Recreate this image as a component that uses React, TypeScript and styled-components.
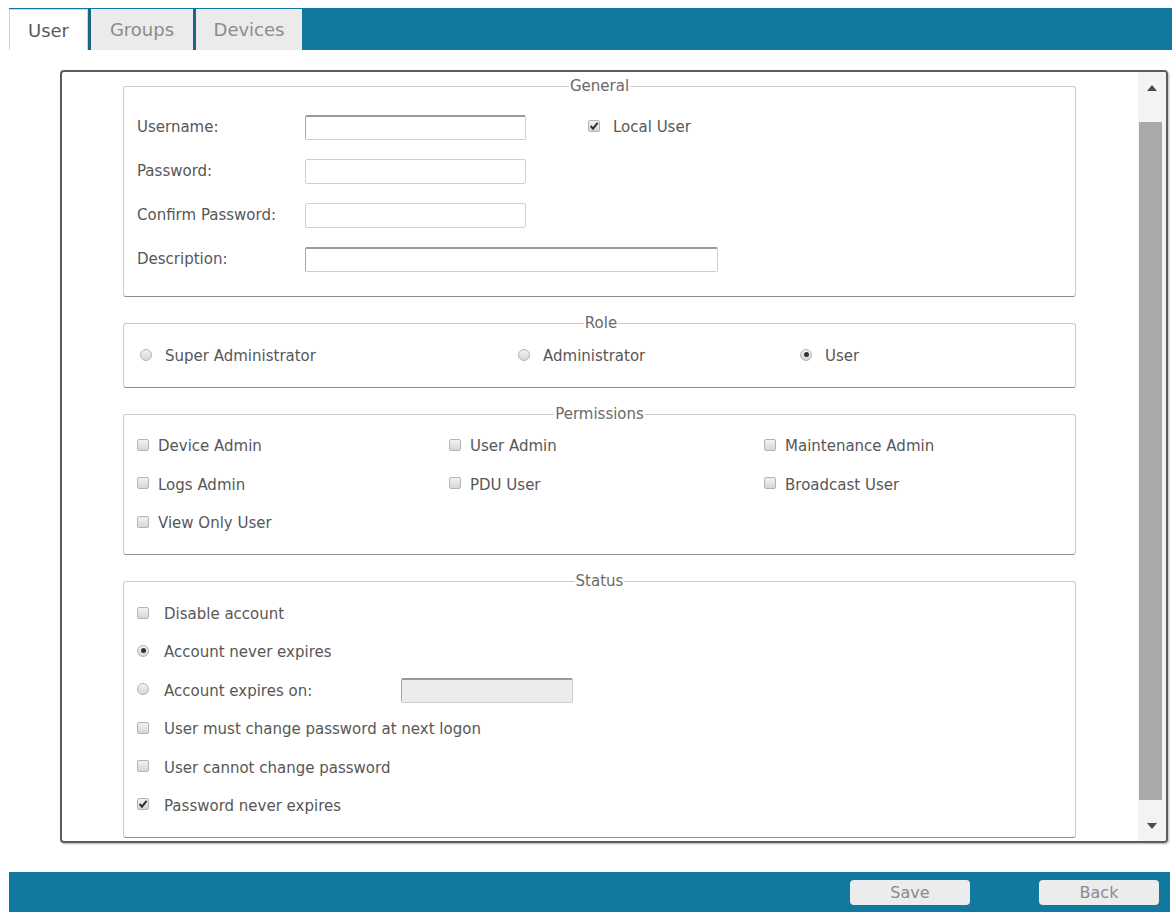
import React from 'react';
import styled, { createGlobalStyle, css } from 'styled-components';

const BLUE = '#11789f';

const GlobalStyle = createGlobalStyle`
  html, body {
    margin: 0;
    background: #fff;
  }
  body {
    font-family: 'DejaVu Sans', Verdana, sans-serif;
    color: #575757;
  }
`;

const Page = styled.div`
  width: 1176px;
  padding: 8px 0 0 9px;
  box-sizing: border-box;
`;

/* ---- tabs ---- */

const TabBar = styled.div`
  display: flex;
  width: 1163px;
  height: 42px;
  background: ${BLUE};
`;

interface TabProps {
  $active?: boolean;
  $width: number;
  $divider?: boolean;
}

const Tab = styled.div<TabProps>`
  width: ${(p) => p.$width}px;
  box-sizing: border-box;
  display: flex;
  align-items: center;
  justify-content: center;
  font-size: 18px;
  color: #8c8c8c;
  background: #ebebeb;
  margin-top: 1px;

  ${(p) =>
    p.$divider &&
    css`
      border-left: 3px solid #1d6480;
    `}

  ${(p) =>
    p.$active &&
    css`
      color: #5a5a5a;
      background: #fff;
      border: 1px solid #d2d2d2;
      border-bottom: none;
    `}
`;

/* ---- scrolling panel ---- */

const Panel = styled.div`
  margin: 20px 0 0 51px;
  width: 1108px;
  height: 773px;
  box-sizing: border-box;
  border: 2px solid #5c5c5c;
  border-radius: 4px;
  box-shadow: 1px 1px 2px rgba(0, 0, 0, 0.3);
  display: flex;
  overflow: hidden;
`;

const ScrollArea = styled.div`
  flex: 1;
  padding: 6px 62px 0 61px;
  display: flex;
  flex-direction: column;
  gap: 18px;
  overflow: hidden;
`;

const Scrollbar = styled.div`
  width: 28px;
  background: #f3f3f3;
  display: flex;
  flex-direction: column;
`;

const ScrollArrow = styled.div`
  height: 31px;
  display: flex;
  align-items: center;
  justify-content: center;
`;

const ScrollThumb = styled.div`
  margin: 19px 4px 10px 1px;
  height: 678px;
  background: #a9a9a9;
`;

/* ---- fieldsets ---- */

const Section = styled.fieldset<{ $pad: string }>`
  margin: 0;
  min-width: 0;
  padding: ${(p) => p.$pad};
  border: 1px solid #cbcbcb;
  border-bottom-color: #8e8e8e;
  border-radius: 3px;
`;

const Legend = styled.legend`
  margin: 0 auto;
  padding: 0 1px;
  font-size: 15px;
  line-height: 16px;
  color: #6a6a6a;
`;

const FormGrid = styled.div`
  display: flex;
  flex-direction: column;
  gap: 18px;
`;

const FieldRow = styled.div`
  display: flex;
  align-items: center;
  height: 26px;
`;

const FieldLabel = styled.span`
  width: 168px;
  font-size: 15px;
`;

const TextInput = styled.div<{ $width: number; $inset?: boolean; $disabled?: boolean }>`
  width: ${(p) => p.$width}px;
  height: 25px;
  box-sizing: border-box;
  border: 1px solid #cfcfcf;
  border-radius: 2px;
  background: ${(p) => (p.$disabled ? '#ececec' : '#fff')};

  ${(p) =>
    p.$inset &&
    css`
      border-top: 2px solid #9a9a9a;
      border-left-color: #a8a8a8;
    `}
`;

const OptionItem = styled.label<{ $gap: number; $offset?: number }>`
  display: flex;
  align-items: center;
  gap: ${(p) => p.$gap}px;
  height: 20px;
  font-size: 15px;
  margin-left: ${(p) => p.$offset ?? 0}px;
`;

const Box = styled.span`
  width: 12px;
  height: 12px;
  box-sizing: border-box;
  border: 1px solid #b4b4b4;
  border-radius: 2px;
  background: linear-gradient(#f2f2f2, #d6d6d6);
  display: flex;
  align-items: center;
  justify-content: center;
  flex-shrink: 0;
  margin-top: -3px;
`;

const Round = styled(Box)`
  border-radius: 50%;
`;

const Dot = styled.span`
  width: 5px;
  height: 5px;
  border-radius: 50%;
  background: #333;
`;

const RoleGrid = styled.div`
  display: grid;
  grid-template-columns: 378px 282px 1fr;
`;

const PermissionGrid = styled.div`
  display: grid;
  grid-template-columns: 312px 315px 1fr;
  row-gap: 18.5px;
`;

const StatusList = styled.div`
  display: flex;
  flex-direction: column;
  gap: 14.4px;
`;

const StatusRow = styled.div`
  display: flex;
  align-items: center;
  height: 24px;
`;

const ExpiryLabel = styled.span`
  width: 237px;
`;

/* ---- footer ---- */

const Footer = styled.div`
  margin-top: 29px;
  width: 1161px;
  height: 40px;
  box-sizing: border-box;
  background: ${BLUE};
  display: flex;
  align-items: center;
  justify-content: flex-end;
  gap: 69px;
  padding-right: 11px;
`;

const FooterButton = styled.button`
  width: 120px;
  height: 25px;
  border: none;
  border-radius: 4px;
  background: #ececec;
  color: #8a8a8a;
  font-family: inherit;
  font-size: 16px;
  padding: 0;
`;

const CheckBox: React.FC<{ checked?: boolean }> = ({ checked }) => (
  <Box>
    {checked && (
      <svg width="10" height="10" viewBox="0 0 10 10">
        <path d="M1.6 5 L4 7.6 L8.6 1.8" fill="none" stroke="#2e2e2e" strokeWidth="2" />
      </svg>
    )}
  </Box>
);

const Radio: React.FC<{ checked?: boolean }> = ({ checked }) => <Round>{checked && <Dot />}</Round>;

const Arrow: React.FC<{ down?: boolean }> = ({ down }) => (
  <svg width="10" height="6" viewBox="0 0 10 6">
    <path d={down ? 'M0 0 H10 L5 6 Z' : 'M0 6 H10 L5 0 Z'} fill="#4a4a4a" />
  </svg>
);

const permissions = [
  ['Device Admin', 'User Admin', 'Maintenance Admin'],
  ['Logs Admin', 'PDU User', 'Broadcast User'],
  ['View Only User'],
];

const App: React.FC = () => (
  <Page>
    <GlobalStyle />
    <TabBar>
      <Tab $active $width={79}>
        User
      </Tab>
      <Tab $divider $width={105}>
        Groups
      </Tab>
      <Tab $divider $width={109}>
        Devices
      </Tab>
    </TabBar>

    <Panel>
      <ScrollArea>
        <Section $pad="20px 13px 24px">
          <Legend>General</Legend>
          <FormGrid>
            <FieldRow>
              <FieldLabel>Username:</FieldLabel>
              <TextInput $width={221} $inset />
              <OptionItem $gap={13} $offset={62}>
                <CheckBox checked />
                Local User
              </OptionItem>
            </FieldRow>
            <FieldRow>
              <FieldLabel>Password:</FieldLabel>
              <TextInput $width={221} />
            </FieldRow>
            <FieldRow>
              <FieldLabel>Confirm Password:</FieldLabel>
              <TextInput $width={221} />
            </FieldRow>
            <FieldRow>
              <FieldLabel>Description:</FieldLabel>
              <TextInput $width={413} $inset />
            </FieldRow>
          </FormGrid>
        </Section>

        <Section $pad="15px 13px 21px 16px">
          <Legend>Role</Legend>
          <RoleGrid>
            <OptionItem $gap={13}>
              <Radio />
              Super Administrator
            </OptionItem>
            <OptionItem $gap={13}>
              <Radio />
              Administrator
            </OptionItem>
            <OptionItem $gap={13}>
              <Radio checked />
              User
            </OptionItem>
          </RoleGrid>
        </Section>

        <Section $pad="14px 13px 21px">
          <Legend>Permissions</Legend>
          <PermissionGrid>
            {permissions.flat().map((name) => (
              <OptionItem key={name} $gap={9}>
                <CheckBox />
                {name}
              </OptionItem>
            ))}
          </PermissionGrid>
        </Section>

        <Section $pad="13px 13px 19px">
          <Legend>Status</Legend>
          <StatusList>
            <StatusRow>
              <OptionItem $gap={15}>
                <CheckBox />
                Disable account
              </OptionItem>
            </StatusRow>
            <StatusRow>
              <OptionItem $gap={15}>
                <Radio checked />
                Account never expires
              </OptionItem>
            </StatusRow>
            <StatusRow>
              <OptionItem $gap={15}>
                <Radio />
                <ExpiryLabel>Account expires on:</ExpiryLabel>
              </OptionItem>
              <TextInput $width={172} $inset $disabled />
            </StatusRow>
            <StatusRow>
              <OptionItem $gap={15}>
                <CheckBox />
                User must change password at next logon
              </OptionItem>
            </StatusRow>
            <StatusRow>
              <OptionItem $gap={15}>
                <CheckBox />
                User cannot change password
              </OptionItem>
            </StatusRow>
            <StatusRow>
              <OptionItem $gap={15}>
                <CheckBox checked />
                Password never expires
              </OptionItem>
            </StatusRow>
          </StatusList>
        </Section>
      </ScrollArea>

      <Scrollbar>
        <ScrollArrow>
          <Arrow />
        </ScrollArrow>
        <ScrollThumb />
        <ScrollArrow>
          <Arrow down />
        </ScrollArrow>
      </Scrollbar>
    </Panel>

    <Footer>
      <FooterButton>Save</FooterButton>
      <FooterButton>Back</FooterButton>
    </Footer>
  </Page>
);

export default App;
